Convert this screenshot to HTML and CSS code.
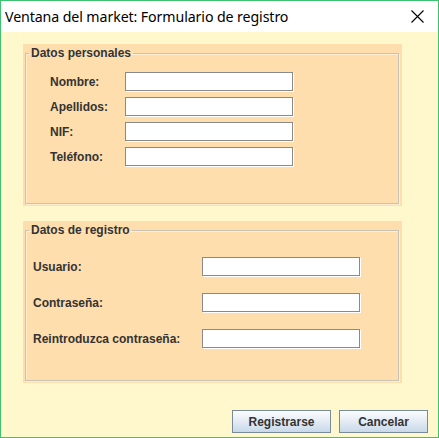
FILE: index.html
```html
<!DOCTYPE html>
<html lang="es">
<head>
<meta charset="utf-8">
<title>Ventana del market</title>
<link rel="stylesheet" href="styles.css">
</head>
<body>
<div class="window">
  <div class="titlebar">
    <span class="title">Ventana del market: Formulario de registro</span>
    <svg class="close" width="13" height="13" viewBox="0 0 13 13"><path d="M0.5 0.5 L12.5 12.5 M12.5 0.5 L0.5 12.5" stroke="#000" stroke-width="1.1" fill="none"/></svg>
  </div>
  <div class="content">
    <div class="panel">
      <fieldset class="group">
        <legend>Datos personales</legend>
        <div class="form personal">
          <label>Nombre:</label><span class="field"></span>
          <label>Apellidos:</label><span class="field"></span>
          <label>NIF:</label><span class="field"></span>
          <label>Teléfono:</label><span class="field"></span>
        </div>
      </fieldset>
    </div>
    <div class="panel">
      <fieldset class="group">
        <legend>Datos de registro</legend>
        <div class="form registro">
          <label>Usuario:</label><span class="field"></span>
          <label>Contraseña:</label><span class="field"></span>
          <label>Reintroduzca contraseña:</label><span class="field"></span>
        </div>
      </fieldset>
    </div>
    <div class="buttons">
      <button class="btn btn-register">Registrarse</button>
      <button class="btn btn-cancel">Cancelar</button>
    </div>
  </div>
</div>
</body>
</html>
```
FILE: styles.css
```css
html, body {
  margin: 0;
  padding: 0;
  background: #ffffff;
}
.window {
  width: 439px;
  height: 438px;
  box-sizing: border-box;
  border: 1px solid #3ec26f;
  display: flex;
  flex-direction: column;
  font-family: "Liberation Sans", Arial, sans-serif;
}
.titlebar {
  height: 30px;
  flex: none;
  background: #ffffff;
  display: flex;
  align-items: center;
  justify-content: space-between;
  padding: 0 14px 1px 4px;
}
.title {
  font-family: "Noto Sans", sans-serif;
  font-size: 14.2px;
  color: #000;
  letter-spacing: -0.1px;
}
.close {
  display: block;
  margin-top: 1px;
}
.content {
  flex: 1;
  background: #fff8cc;
  display: flex;
  flex-direction: column;
  padding: 12px 0 0 22px;
}
.panel {
  width: 379px;
  height: 162px;
  box-sizing: border-box;
  background: #ffdead;
  padding: 1px 3px 2px 2px;
  display: flex;
}
.panel + .panel {
  margin-top: 15px;
}
.group {
  flex: 1;
  margin: 0;
  padding: 0;
  border: 1px solid #c9c2b7;
  box-shadow: inset 1px 1px 0 rgba(255,255,255,0.45), 1px 1px 0 rgba(255,255,255,0.45);
  min-width: 0;
}
.group legend {
  font-size: 12px;
  font-weight: bold;
  color: #333333;
  line-height: 16px;
  padding: 0 2px;
  margin-left: 3px;
}
.form {
  display: grid;
  align-items: center;
}
.form label {
  font-size: 12px;
  font-weight: bold;
  color: #333333;
}
.personal {
  grid-template-columns: 75px 168px;
  grid-auto-rows: 19px;
  row-gap: 6px;
  padding: 11px 0 0 24px;
}
.registro {
  grid-template-columns: 169px 158px;
  grid-auto-rows: 19px;
  row-gap: 17px;
  padding: 19px 0 0 7px;
}
.field {
  display: block;
  height: 19px;
  box-sizing: border-box;
  background: #ffffff;
  border: 1px solid #8a8a8a;
  box-shadow: 1px 1px 0 #ffffff;
}
.buttons {
  margin-top: auto;
  display: flex;
  justify-content: flex-end;
  gap: 8px;
  padding: 0 10px 4px 0;
}
.btn {
  height: 23px;
  box-sizing: border-box;
  border: 1px solid #7a8a99;
  background: linear-gradient(to bottom, #fbfcfe 0%, #e6edf5 45%, #c9d9ea 100%);
  font-family: "Liberation Sans", Arial, sans-serif;
  font-size: 12px;
  font-weight: bold;
  color: #333333;
  padding: 0;
  margin: 0;
}
.btn-register {
  width: 99px;
}
.btn-cancel {
  width: 89px;
}
```
